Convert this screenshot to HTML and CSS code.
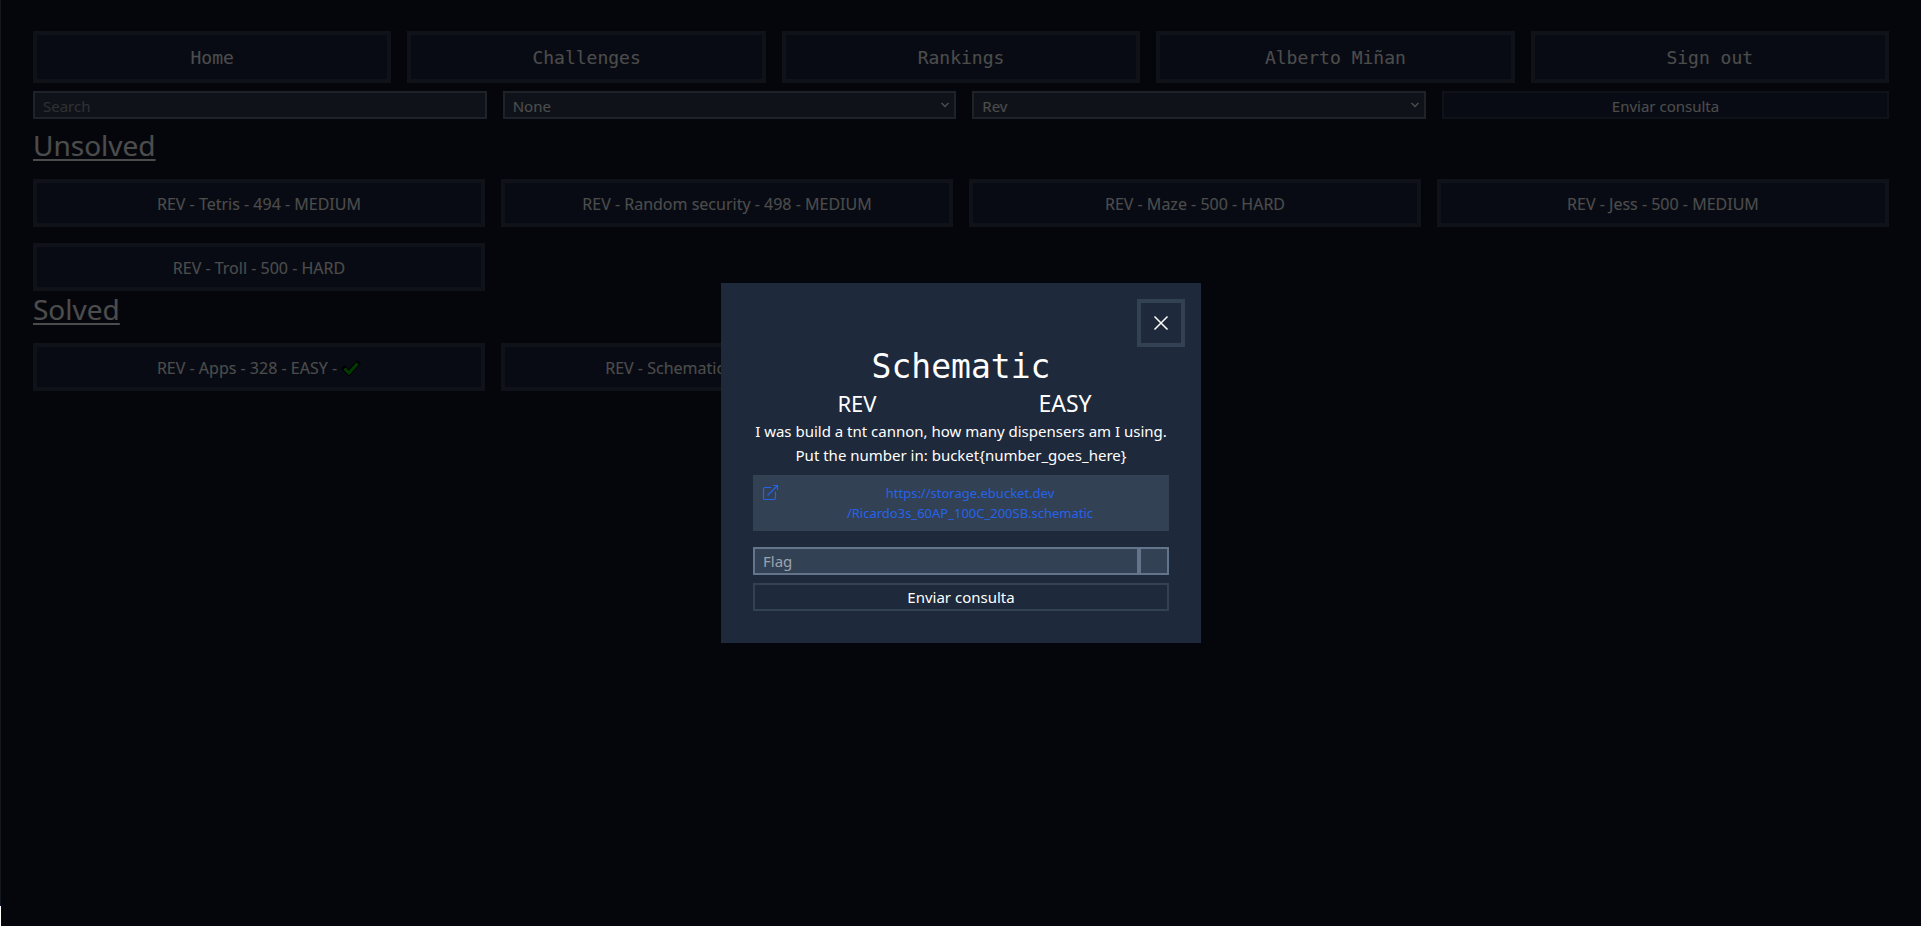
FILE: index.html
```html
<!DOCTYPE html>
<html lang="es">
<head>
<meta charset="utf-8">
<title>Challenges</title>
<link rel="stylesheet" href="styles.css">
</head>
<body>
<div class="edge"></div>
<div class="page">
  <nav class="nav">
    <a class="nav-link" href="#">Home</a>
    <a class="nav-link" href="#">Challenges</a>
    <a class="nav-link" href="#">Rankings</a>
    <a class="nav-link" href="#">Alberto Miñan</a>
    <a class="nav-link" href="#">Sign out</a>
  </nav>
  <form class="filters">
    <input class="field" type="text" placeholder="Search" aria-label="Search">
    <div class="select-wrap">
      <select class="field" aria-label="Difficulty"><option>None</option></select>
      <svg class="chevron" viewBox="0 0 10 10" aria-hidden="true"><path d="M1.5 3l3.5 3.5L8.500 3"/></svg>
    </div>
    <div class="select-wrap">
      <select class="field" aria-label="Category"><option>Rev</option></select>
      <svg class="chevron" viewBox="0 0 10 10" aria-hidden="true"><path d="M1.5 3l3.5 3.5L8.500 3"/></svg>
    </div>
    <button class="submit" type="button">Enviar consulta</button>
  </form>
  <main>
    <h2 class="heading">Unsolved</h2>
    <div class="cards">
      <button class="card">REV - Tetris - 494 - MEDIUM</button>
      <button class="card">REV - Random security - 498 - MEDIUM</button>
      <button class="card">REV - Maze - 500 - HARD</button>
      <button class="card">REV - Jess - 500 - MEDIUM</button>
      <button class="card">REV - Troll - 500 - HARD</button>
    </div>
    <h2 class="heading">Solved</h2>
    <div class="cards">
      <button class="card">REV - Apps - 328 - EASY - <svg class="check" viewBox="0 0 20 20" aria-hidden="true"><path class="check-outline" d="M3.500 10.500l4.500 4.500 8.500-9.500"/><path d="M3.500 10.500l4.500 4.500 8.500-9.500"/></svg></button>
      <button class="card">REV - Schematic - 436 - EASY - <svg class="check" viewBox="0 0 20 20" aria-hidden="true"><path class="check-outline" d="M3.500 10.500l4.500 4.500 8.500-9.500"/><path d="M3.500 10.500l4.500 4.500 8.500-9.500"/></svg></button>
    </div>
  </main>
</div>
<div class="overlay">
  <section class="modal" role="dialog" aria-modal="true" aria-labelledby="modal-title">
    <button class="close" aria-label="Close"><svg viewBox="0 0 24 24" aria-hidden="true"><path d="M5.500 5.500l13 13M18.500 5.500l-13 13"/></svg></button>
    <div class="modal-body">
      <h1 class="title" id="modal-title">Schematic</h1>
      <div class="meta"><span class="category">REV</span><span class="level">EASY</span></div>
      <p class="text">I was build a tnt cannon, how many dispensers am I using.<br>Put the number in: bucket{number_goes_here}</p>
      <a class="download" href="#">
        <svg class="external" viewBox="0 0 18 18" aria-hidden="true"><path d="M10 4.500H4A1.500 1.500 0 0 0 2.500 6v9A1.500 1.500 0 0 0 4 16.500h9a1.500 1.500 0 0 0 1.500-1.500V8.500M6.500 12.500L16.500 2.500M12 2.500h4.500V7"/></svg>
        <span class="url">https://storage.ebucket.dev<br>/Ricardo3s_60AP_100C_200SB.schematic</span>
      </a>
      <form class="flag-form">
        <div class="flag-row">
          <input class="field" type="text" placeholder="Flag" aria-label="Flag">
          <div class="status"></div>
        </div>
        <button class="submit" type="button">Enviar consulta</button>
      </form>
    </div>
  </section>
</div>
</body>
</html>
```
FILE: styles.css
```css
* { box-sizing: border-box; }
body {
  margin: 0;
  min-height: 100vh;
  display: flex;
  background: #0f172a;
  color: #fff;
  font: 15px/24px "Noto Sans", "Open Sans", sans-serif;
}
h1, h2, p { margin: 0; font-weight: 400; }
button, input, select { font: inherit; color: inherit; margin: 0; border-radius: 0; }
a { color: inherit; text-decoration: none; }

.edge { width: 1px; background: linear-gradient(#15191e 97%, #0f172a 97.8%, #fff 97.8%); }
.page { flex: 1; min-width: 0; padding: 31px 32px; }

.nav { display: grid; grid-template-columns: repeat(5, 1fr); gap: 16px; }
.nav-link {
  padding: 9px 8px 7px;
  border: 4px solid #334155;
  background: #1b2742;
  text-align: center;
  font: 18px/28px "DejaVu Sans Mono", monospace;
}

.filters {
  display: grid;
  grid-template-columns: repeat(3, minmax(0, 1fr)) calc(25% - 17px);
  gap: 16px;
  margin: 8px 0;
}
.field {
  width: 100%;
  height: 28px;
  padding: 0 8px;
  border: 2px solid #64748b;
  background: #334155;
  appearance: none;
  outline: 0;
}
.field::placeholder { color: #9ca3af; opacity: 1; }
.filters .field { padding-top: 1px; }
.select-wrap { position: relative; }
.chevron {
  position: absolute;
  right: 6px;
  top: 9px;
  width: 10px;
  height: 10px;
  fill: none;
  stroke: #fff;
  stroke-width: 1.500;
  pointer-events: none;
}
.submit {
  width: 100%;
  height: 28px;
  padding: 0;
  border: 2px solid #334155;
  background: #1e293b;
}
.filters .submit { padding-top: 1px; background: #1b2742; }

.heading {
  margin-bottom: 16px;
  font-size: 28px;
  line-height: 36px;
  text-decoration: underline;
  text-decoration-thickness: 2px;
  text-underline-offset: 3px;
  text-decoration-skip-ink: none;
}
.cards { display: grid; grid-template-columns: repeat(4, 1fr); gap: 16px; }
.card {
  display: flex;
  justify-content: center;
  align-items: center;
  gap: 4px;
  padding: 9px 8px 7px;
  border: 4px solid #334155;
  background: #1b2742;
  font-size: 16px;
}
.check {
  width: 20px;
  height: 20px;
  fill: none;
  stroke: #00c800;
  stroke-width: 3;
}
.check-outline { stroke: #000; stroke-width: 5; stroke-linecap: square; }

.overlay {
  position: fixed;
  inset: 0 0 0 1px;
  display: grid;
  place-items: center;
  background: rgba(0, 0, 0, 0.7);
}
.modal { width: 480px; padding: 16px; background: #1e293b; }
.close {
  display: grid;
  place-items: center;
  width: 48px;
  height: 48px;
  margin-left: auto;
  padding: 0;
  border: 4px solid #334155;
  background: transparent;
}
.close svg { width: 24px; height: 24px; fill: none; stroke: #fff; stroke-width: 1.500; }
.modal-body { padding: 0 16px 16px; text-align: center; }
.title { font: 33px/40px "DejaVu Sans Mono", monospace; }
.meta { display: grid; grid-template-columns: 1fr 1fr; line-height: 32px; }
.category { font-size: 22px; }
.level { font-size: 23px; }
.download {
  display: flex;
  margin: 8px 0 16px;
  padding: 8px;
  background: #334155;
  color: #2563eb;
  font-size: 13px;
  line-height: 20px;
}
.external { width: 18px; height: 18px; fill: none; stroke: #2563eb; stroke-width: 1.200; }
.url { flex: 1; }
.flag-form { display: grid; gap: 8px; }
.flag-row { display: flex; }
.status { flex: none; width: 30px; border: 2px solid #64748b; background: #334155; }
```
